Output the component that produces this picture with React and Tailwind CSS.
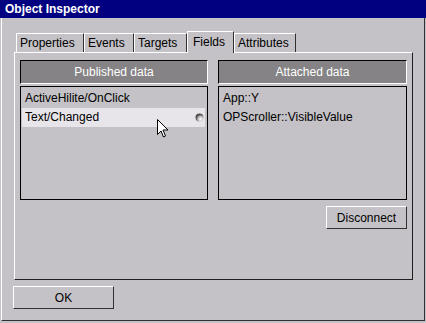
const font = { fontFamily: '"Liberation Sans", Arial, sans-serif' }

const tabs = [
  { label: 'Properties', w: 'w-[68px]' },
  { label: 'Events', w: 'w-[50px]' },
  { label: 'Targets', w: 'w-[53px]' },
  { label: 'Fields', w: 'w-[47px]', active: true },
  { label: 'Attributes', w: 'w-[62px]' },
]

function Tab({ label, w, active }) {
  if (active) {
    return (
      <div className={`${w} h-[22px] -mb-[1px] relative z-10 bg-[#c4c2c6] border-t border-l border-white border-r border-r-[#303030] pl-[5px] pt-[2px] text-[12px] leading-[16px] text-black`}>
        {label}
      </div>
    )
  }
  return (
    <div className={`${w} h-[19px] mt-[2px] border-t border-l border-white border-r border-r-[#303030] pl-[3px] pt-[2px] text-[12px] leading-[15px] text-black`}>
      {label}
    </div>
  )
}

function Header({ children }) {
  return (
    <div className="h-[24px] bg-[#858385] border-t border-l border-black border-b border-r border-b-white border-r-white flex items-center justify-center text-white text-[12px]">
      {children}
    </div>
  )
}

function Radio() {
  return (
    <svg width="9" height="9" viewBox="0 0 9 9">
      <defs>
        <radialGradient id="rg" cx="0.65" cy="0.7" r="0.6">
          <stop offset="0" stopColor="#ffffff" />
          <stop offset="0.5" stopColor="#c8c8c8" />
          <stop offset="1" stopColor="#4a4a4a" />
        </radialGradient>
      </defs>
      <circle cx="4.5" cy="4.5" r="4" fill="url(#rg)" />
    </svg>
  )
}

function Cursor() {
  return (
    <svg className="absolute left-[157px] top-[119px]" width="12" height="19" viewBox="0 0 12 19">
      <path d="M0.5 0.5 L0.5 15.5 L4 12 L6.5 18 L8.5 17 L6 11 L11 11 Z" fill="#fff" stroke="#000" strokeWidth="1" strokeLinejoin="miter" />
    </svg>
  )
}

export default function App() {
  return (
    <div className="w-[426px] h-[323px] bg-[#c4c2c6] overflow-hidden relative" style={font}>
      <div className="h-[18px] bg-[#000080] text-white font-bold text-[12px] leading-[18px] pl-[5px]">
        Object Inspector
      </div>
      <div className="ml-[1px] w-[424px] h-[303px] border-l border-white border-r border-b border-r-[#303030] border-b-[#303030] pl-[12px]">
        <div className="flex pl-[2px] h-[34px] items-end">
          {tabs.map((t) => (
            <Tab key={t.label} {...t} />
          ))}
        </div>
        <div className="w-[399px] h-[228px] border-t border-l border-white border-r border-b border-r-[#202020] border-b-[#202020] pl-[5px] pr-[5px] pt-[7px] flex gap-[10px]">
          <div className="w-[188px] flex flex-col">
            <Header>Published data</Header>
            <div className="mt-[2px] h-[114px] border border-black p-[2px] pl-[1px] text-[12px] text-black">
              <div className="h-[19px] pl-[3px] leading-[19px]">ActiveHilite/OnClick</div>
              <div className="h-[19px] pl-[3px] leading-[19px] bg-[#e8e5ea] flex items-center justify-between pr-[1px]">
                <span>Text/Changed</span>
                <Radio />
              </div>
            </div>
          </div>
          <div className="w-[189px] flex flex-col">
            <Header>Attached data</Header>
            <div className="mt-[2px] h-[114px] border border-black p-[2px] pl-[1px] text-[12px] text-black">
              <div className="h-[19px] pl-[3px] leading-[19px]">App::Y</div>
              <div className="h-[19px] pl-[3px] leading-[19px]">OPScroller::VisibleValue</div>
            </div>
            <div className="flex justify-end mt-[6px]">
              <button className="w-[81px] h-[23px] border-t border-l border-white border-r border-b border-r-[#303030] border-b-[#303030] text-[12px] text-black flex items-center justify-center">
                Disconnect
              </button>
            </div>
          </div>
        </div>
        <div className="mt-[6px] -ml-[1px]">
          <button className="w-[101px] h-[23px] border-t border-l border-white border-r border-b border-r-[#303030] border-b-[#303030] text-[12px] text-black flex items-center justify-center">
            OK
          </button>
        </div>
      </div>
      <Cursor />
    </div>
  )
}
